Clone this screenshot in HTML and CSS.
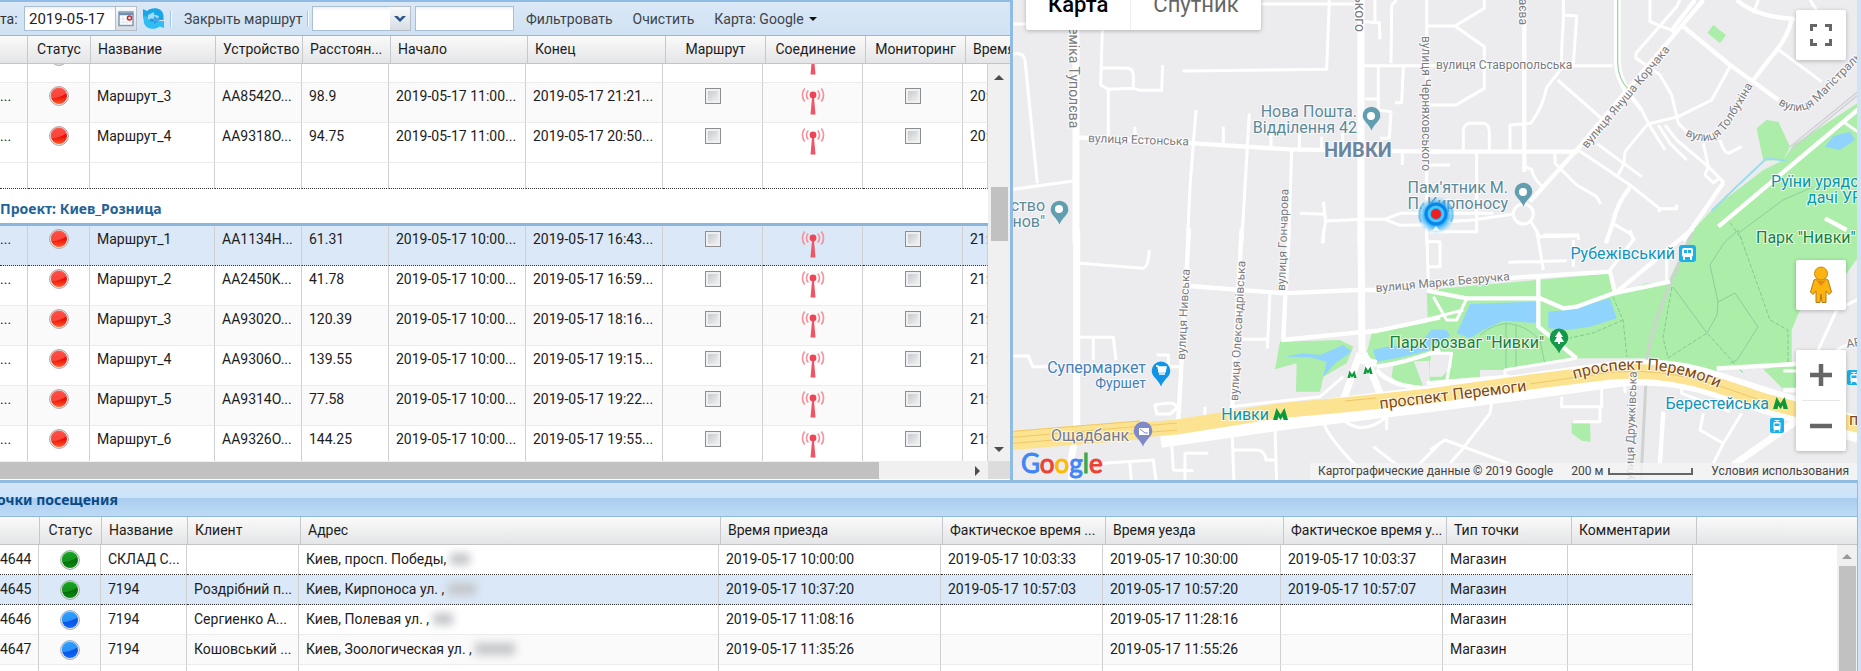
FILE: index.html
```html
<!DOCTYPE html>
<html lang="ru">
<head>
<meta charset="utf-8">
<title>Мониторинг маршрутов</title>
<link rel="stylesheet" href="styles.css">
</head>
<body>
<svg class="defs" aria-hidden="true">
  <defs>
    <linearGradient id="redFill" x1="0" y1="0" x2="0" y2="1"><stop offset="0" stop-color="#ff2a22"/><stop offset=".5" stop-color="#e80e06"/><stop offset="1" stop-color="#ff5a28"/></linearGradient>
    <linearGradient id="greenFill" x1="0" y1="0" x2="0" y2="1"><stop offset="0" stop-color="#079a12"/><stop offset=".5" stop-color="#046b0a"/><stop offset="1" stop-color="#0a8a14"/></linearGradient>
    <linearGradient id="blueFill" x1="0" y1="0" x2="0" y2="1"><stop offset="0" stop-color="#1592ff"/><stop offset=".5" stop-color="#0b4fe0"/><stop offset="1" stop-color="#0a6cff"/></linearGradient>
    <radialGradient id="glow"><stop offset="0" stop-color="#12a4f8"/><stop offset=".6" stop-color="#1aa8f6" stop-opacity=".85"/><stop offset="1" stop-color="#5cc4f8" stop-opacity="0"/></radialGradient>
    <symbol id="dot-red" viewBox="0 0 20 20"><circle cx="10" cy="10" r="9.4" fill="#f3eeee" stroke="#a9a0a0" stroke-width="1"/><circle cx="10" cy="10" r="8" fill="url(#redFill)"/><path d="M2.2 12C6 12.500 13 11 17.500 7A8 8 0 0 0 2.200 12z" fill="#ff5a50" opacity=".75"/></symbol>
    <symbol id="dot-green" viewBox="0 0 20 20"><circle cx="10" cy="10" r="9.4" fill="#eef3ee" stroke="#93a595" stroke-width="1"/><circle cx="10" cy="10" r="8" fill="url(#greenFill)"/><path d="M2.2 12C6 12.500 13 11 17.500 7A8 8 0 0 0 2.200 12z" fill="#1fae2c" opacity=".6"/></symbol>
    <symbol id="dot-blue" viewBox="0 0 20 20"><circle cx="10" cy="10" r="9.4" fill="#eef1f6" stroke="#95a2b2" stroke-width="1"/><circle cx="10" cy="10" r="8" fill="url(#blueFill)"/><path d="M2.2 12C6 12.500 13 11 17.500 7A8 8 0 0 0 2.200 12z" fill="#35a6ff" opacity=".75"/></symbol>
    <symbol id="antenna" viewBox="0 0 24 28"><circle cx="12" cy="8" r="3.4" fill="#ef4456"/><path d="M11 11h2l1.500 16.500h-5z" fill="#ef5564"/><g fill="none" stroke="#f5929b" stroke-width="1.700"><path d="M7.300 3.500a6.500 6.500 0 0 0 0 9M16.700 3.500a6.500 6.500 0 0 1 0 9M3.700 1.500a10.500 10.500 0 0 0 0 13M20.300 1.500a10.500 10.500 0 0 1 0 13"/></g></symbol>
    <symbol id="pin" viewBox="0 0 20 26"><path d="M10 0.500a9.300 9.300 0 0 1 9.300 9.300c0 6-6.300 8.200-9.300 15.700c-3-7.500-9.300-9.700-9.300-15.700A9.300 9.300 0 0 1 10 .5z"/></symbol>
    <symbol id="metro" viewBox="0 0 15 13"><path d="M0 13L3.500 1 7.500 7.500 11.500 1 15 13H10.500L9.800 9.500 7.500 13 5.200 9.500 4.500 13z" fill="#0a9a3c"/></symbol>
    <symbol id="tram" viewBox="0 0 14 15"><rect width="14" height="15" rx="2" fill="#1cb0e8"/><rect x="3.500" y="4" width="7" height="8" rx="1.500" fill="#fff"/><path d="M4.500 2.500h5M7 2.500V4" stroke="#fff"/><rect x="4.500" y="5.500" width="5" height="2.500" fill="#1cb0e8"/><path d="M5 12l-1.200 1.800M9 12l1.200 1.800" stroke="#fff"/></symbol>
  </defs>
</svg>
<div class="app">
  <div class="upper">
    <section class="routes">
      <div class="toolbar">
        <label class="date-label" for="date">та:</label>
        <div class="date-field">
          <input id="date" type="text" value="2019-05-17">
          <button class="trigger" type="button" aria-label="Календарь"><svg width="16" height="16" viewBox="0 0 16 16"><rect x="1" y="1" width="14" height="13.500" fill="#fff" stroke="#7d9bb8" stroke-width="1.500"/><path d="M1 3h14" stroke="#6f90b2" stroke-width="2.500"/><path d="M5 5v9M9 5v9M2 8h12M2 11h12" stroke="#dfe6ee"/><circle cx="11.500" cy="7" r="2" fill="#fff" stroke="#d0202a" stroke-width="1.500"/></svg></button>
        </div>
        <button class="refresh" type="button" aria-label="Обновить"><svg width="21" height="21" viewBox="0 0 21 21"><path d="M0 1L4 3C9-1.500 20-1 20.500 8V12h-6L10 10 5 9.500 0 10z" fill="#1aa5e6"/><path d="M21 20l-4.500-1.500C12 22.500 3 21.500 1 15L0 8l4 .5 7 1.500 0 3h10z" fill="#30bdf2"/><path d="M5 7l6-3v2.500l5 1.500-1 2 2 3-6 1v-2L5 11z" fill="#bfeaff" opacity=".8"/><path d="M11 8l6 4-6 4v-2.500H7v-3h4z" fill="#1b86d4" opacity=".7"/></svg></button>
        <span class="sep"></span>
        <button class="tb-btn close-route" type="button">Закрыть маршрут</button>
        <span class="sep"></span>
        <div class="combo">
          <select aria-label="Поле фильтра"><option></option></select>
          <span class="trigger combo-arrow"><svg width="12" height="8" viewBox="0 0 12 8"><path d="M0 1h3.500L6 3.500 8.500 1H12L6 7z" fill="#2a5690"/></svg></span>
        </div>
        <input class="filter" type="text" aria-label="Значение фильтра">
        <button class="tb-btn" type="button">Фильтровать</button>
        <button class="tb-btn" type="button">Очистить</button>
        <button class="tb-btn menu" type="button">Карта: Google<span class="caret"></span></button>
      </div>
      <table class="grid head">
        <colgroup><col class="w28"><col class="w63"><col class="w125"><col class="w87"><col class="w88"><col class="w137"><col class="w138"><col class="w100"><col class="w100"><col class="w100"><col></colgroup>
        <tr><th></th><th class="mid">Статус</th><th>Название</th><th>Устройство</th><th>Расстоян...</th><th>Начало</th><th>Конец</th><th class="mid">Маршрут</th><th class="mid">Соединение</th><th class="mid">Мониторинг</th><th>Время</th></tr>
      </table>
      <div class="viewport">
        <div class="scroll-area">
          <table class="grid body tall scrolled">
            <colgroup><col class="w28"><col class="w62"><col class="w125"><col class="w87"><col class="w87"><col class="w137"><col class="w137"><col class="w100"><col class="w100"><col class="w100"><col></colgroup>
            <tr><td></td><td class="mid"><svg class="dot"><use href="#dot-red"/></svg></td><td></td><td></td><td></td><td></td><td></td><td></td><td class="mid"><svg class="ant"><use href="#antenna"/></svg></td><td></td><td></td></tr>
            <tr class="alt"><td class="cut">...</td><td class="mid"><svg class="dot"><use href="#dot-red"/></svg></td><td>Маршрут_3</td><td>AA8542O...</td><td>98.9</td><td>2019-05-17 11:00...</td><td>2019-05-17 21:21...</td><td class="mid"><input type="checkbox" aria-label="Маршрут"></td><td class="mid"><svg class="ant"><use href="#antenna"/></svg></td><td class="mid"><input type="checkbox" aria-label="Мониторинг"></td><td>20:</td></tr>
            <tr><td class="cut">...</td><td class="mid"><svg class="dot"><use href="#dot-red"/></svg></td><td>Маршрут_4</td><td>AA9318O...</td><td>94.75</td><td>2019-05-17 11:00...</td><td>2019-05-17 20:50...</td><td class="mid"><input type="checkbox" aria-label="Маршрут"></td><td class="mid"><svg class="ant"><use href="#antenna"/></svg></td><td class="mid"><input type="checkbox" aria-label="Мониторинг"></td><td>20:</td></tr>
            <tr class="summary"><td></td><td></td><td></td><td></td><td></td><td></td><td></td><td></td><td></td><td></td><td></td></tr>
            <tr class="group"><th colspan="11">Проект: Киев_Розница</th></tr>
            <tr class="selected"><td class="cut">...</td><td class="mid"><svg class="dot"><use href="#dot-red"/></svg></td><td>Маршрут_1</td><td>AA1134H...</td><td>61.31</td><td>2019-05-17 10:00...</td><td>2019-05-17 16:43...</td><td class="mid"><input type="checkbox" aria-label="Маршрут"></td><td class="mid"><svg class="ant"><use href="#antenna"/></svg></td><td class="mid"><input type="checkbox" aria-label="Мониторинг"></td><td>21:</td></tr>
            <tr><td class="cut">...</td><td class="mid"><svg class="dot"><use href="#dot-red"/></svg></td><td>Маршрут_2</td><td>AA2450K...</td><td>41.78</td><td>2019-05-17 10:00...</td><td>2019-05-17 16:59...</td><td class="mid"><input type="checkbox" aria-label="Маршрут"></td><td class="mid"><svg class="ant"><use href="#antenna"/></svg></td><td class="mid"><input type="checkbox" aria-label="Мониторинг"></td><td>21:</td></tr>
            <tr class="alt"><td class="cut">...</td><td class="mid"><svg class="dot"><use href="#dot-red"/></svg></td><td>Маршрут_3</td><td>AA9302O...</td><td>120.39</td><td>2019-05-17 10:00...</td><td>2019-05-17 18:16...</td><td class="mid"><input type="checkbox" aria-label="Маршрут"></td><td class="mid"><svg class="ant"><use href="#antenna"/></svg></td><td class="mid"><input type="checkbox" aria-label="Мониторинг"></td><td>21:</td></tr>
            <tr><td class="cut">...</td><td class="mid"><svg class="dot"><use href="#dot-red"/></svg></td><td>Маршрут_4</td><td>AA9306O...</td><td>139.55</td><td>2019-05-17 10:00...</td><td>2019-05-17 19:15...</td><td class="mid"><input type="checkbox" aria-label="Маршрут"></td><td class="mid"><svg class="ant"><use href="#antenna"/></svg></td><td class="mid"><input type="checkbox" aria-label="Мониторинг"></td><td>21:</td></tr>
            <tr class="alt"><td class="cut">...</td><td class="mid"><svg class="dot"><use href="#dot-red"/></svg></td><td>Маршрут_5</td><td>AA9314O...</td><td>77.58</td><td>2019-05-17 10:00...</td><td>2019-05-17 19:22...</td><td class="mid"><input type="checkbox" aria-label="Маршрут"></td><td class="mid"><svg class="ant"><use href="#antenna"/></svg></td><td class="mid"><input type="checkbox" aria-label="Мониторинг"></td><td>21:</td></tr>
            <tr><td class="cut">...</td><td class="mid"><svg class="dot"><use href="#dot-red"/></svg></td><td>Маршрут_6</td><td>AA9326O...</td><td>144.25</td><td>2019-05-17 10:00...</td><td>2019-05-17 19:55...</td><td class="mid"><input type="checkbox" aria-label="Маршрут"></td><td class="mid"><svg class="ant"><use href="#antenna"/></svg></td><td class="mid"><input type="checkbox" aria-label="Мониторинг"></td><td>21:</td></tr>
          </table>
        </div>
        <div class="vbar"><span class="arrow up"></span><span class="vthumb"></span><span class="arrow down"></span></div>
        <div class="hbar"><span class="hthumb"></span><span class="arrow right"></span></div>
        <div class="corner"></div>
      </div>
    </section>
    <div class="splitter"></div>
    <section class="map">
      <svg class="canvas" viewBox="1013 0 844 480" preserveAspectRatio="xMidYMid slice" role="img" aria-label="Карта района Нивки">
        <rect x="900" y="-100" width="1100" height="700" fill="#ececee"/>
        <!-- parks and water -->
        <g transform="translate(1430 0) scale(.33333)">
          <path fill="#abeda9" d="M1300 298L1090 435 1060 480 1000 510 850 625 790 690 765 722H1300zM980 385L1010 360 1045 365 1080 440 1060 480 1000 482zM850 75L888 105 870 130 832 98z"/>
          <path fill="#90d4fd" d="M1185 440L1210 408 1260 395 1275 420 1230 450z"/>
          <path fill="none" stroke="#9bdcf0" stroke-width="6" d="M1070 482L1010 475 925 555 845 632"/>
          <path fill="none" stroke="#cfcfd6" stroke-width="4" d="M1300 262L1080 440M1300 272L1085 446"/>
        </g>
        <g transform="translate(1430 230) scale(.33333)">
          <path fill="#abeda9" d="M-10 180L320 150 545 130 555 190 650 160 715 155 790-4H1300V60L1250 130 1110 240 1085 300V400L860 415V430L780 405 640 385H440L250 420H150V452L0 462zM1000 418L1100 400V478H1060zM425 580H480L482 635 455 632 425 610z"/>
          <path fill="#ececee" d="M0 368H65V410L35 440 0 440z"/>
          <path fill="#90d4fd" d="M80 310L120 222 320 215 325 280 220 272 160 300 120 325zM355 245L410 240 540 205 560 265 480 290 410 300 355 295zM-60 290L-10 298 50 300 60 318 0 350-60 350z"/>
          <path fill="#ececee" d="M650 140L715 70V150z"/>
        </g>
        <g transform="translate(1010 230) scale(.33333)">
          <path fill="#abeda9" d="M810 335L990 330 1030 350 1010 400 940 440 930 485H858L860 400 795 418zM1085 310L1262 275V392L1180 395 1100 405 1070 370zM1150 405L1210 390 1240 470 1180 475 1145 440zM1262 180L1300 178V250L1270 210z"/>
          <path fill="#90d4fd" d="M825 380L880 370 930 375 1000 345 1025 365 975 400 940 440 950 395 900 382zM1090 360L1130 350 1230 345 1262 300V360L1180 380 1100 395z"/>
        </g>
        <!-- railway and footpaths -->
        <g fill="none">
          <path stroke="#cdd3cf" stroke-width="3" d="M1693 230L1672 280Q1650 330 1647 360L1641 480"/>
          <g stroke="#80cb93" stroke-width="1" stroke-dasharray="4 2"><path d="M1738 230L1770 320 1788 330V363M1672 287L1663 337 1668 358 1707 333 1743 373M1613 297L1623 320 1627 357M1623 320L1593 333 1570 338M1727 218L1742 240"/></g>
          <g stroke="#8ccf9c" stroke-width="1"><path d="M1673 287L1707 333 1717 315 1718 302 1710 265 1724 243 1738 230M1718 302L1735 293 1758 327 1737 360 1730 363M1740 232L1783 200 1813 187M1480 335Q1510 310 1540 340L1545 365M1506 322V370M1516 325V368"/></g>
        </g>
        <!-- streets -->
        <g class="streets">
          <g transform="translate(1010 0) scale(.33333)">
            <path class="wide" d="M198 0V730M1053 0V730"/>
            <path d="M8 72H75M8 162Q40 155 45 180L82 550M8 568L190 543M277 90L272 255 295 268 370 265 390 271H455L458 195M277 203L355 205Q370 208 370 230V265M295 268V410M752 12H1040M958 0L950 208 518 213M558 330L540 560 532 730M718 340L695 730M845 448L836 730M375 380V415M640 380V430M783 400V440M868 400V445M935 410V448M998 400V448M870 640L943 643M940 605L947 665 936 730M945 663L1060 658 1125 658 1170 640 1450 640M1125 658L1170 676 1290 674M1062 65L1108 68 1110 118M1095 0V65M1160 0L1145 15 1143 190M1062 197H1270M1105 197V330L1143 335 1138 415H1110M1180 200L1175 308H1155M1065 297H1105M1177 450V495M1250 0V730"/>
            <path class="mid-w" d="M200 412L550 430 840 448 1060 452 1290 455"/>
          </g>
          <g transform="translate(1430 0) scale(.33333)">
            <path d="M-10 78H75L163 25V0M75 78L163 140V265L78 315H-10M-10 197H548M400 0V60L395 150V205L350 262Q340 320 302 370L240 375V450M400 45L440 48 430 195M383 240L520 360M100 455V390Q105 370 120 370H160Q178 370 178 400V450M140 455V695H0M-10 495H60M283 500L305 508Q310 540 345 565M970 40L985 0M1140 0L1160 30M660 0V65L735 95M750 0L740 20 618 160V175L690 225 725 285 745 370 775 400M900 200L845 300 745 350 655 372M635 330L655 370 585 455 582 490 565 525M655 370L705 450M685 375L720 430 770 480M705 375L740 420 835 500 825 525 850 548 868 535M820 430L835 500M870 420Q880 455 895 460L935 440M445 450L600 555 688 625V636M685 626H740V614M500 430L635 530M375 460V490L400 515 440 555 500 590 512 612M1040 145L1175 245M548 670L600 700 615 722M300 660L330 710 440 708M-10 668L130 660 250 642M835 500L882 548M1240 365L1290 400"/>
            <path class="mid-w" d="M283 0V515M-10 455H445M760 80L900 195 970 245 1045 300M920 0Q975 50 1095 57M1085 60Q1070 120 1020 175L970 240M760 722L880 548M600 562Q560 610 548 670L528 730M865 680L1300 315M1185 655L1250 690"/>
            <path class="wide" d="M562 0V190Q565 240 600 285"/>
            <path class="mid-w" d="M820 0L740 95 440 450 300 605M795 0L722 95M600 285L635 330"/>
            <circle cx="280" cy="642" r="30"/>
            <path class="tree-line" d="M563 0V190Q565 235 592 265"/>
          </g>
          <g transform="translate(1010 230) scale(.33333)">
            <path class="wide" d="M200 0V600L185 680V765M1053-5L1056 370"/>
            <path d="M210 100L400 115Q415 110 418 60M780 190L772 355M695 328H772M210 322H310L318 390M250 322V390M10 378H55L68 410H125M440 375H475V410H508M435 525Q500 510 500 535L480 552H440zM940 0V40M1250 0L1255 155M1250 35H1290V110H1255M585 530V560M510 600Q485 610 485 640L490 720 550 722M525 765V670H595M665 560L672 765M672 660H740Q765 660 768 690H800M795 590L800 765M940 575Q950 620 1060 730M1290 640L1200 730M1090 650L1180 720M280 700L430 690 440 765M360 700L365 765M1000 570Q1060 620 1130 560V600M665 530L930 500 1000 440"/>
            <path class="mid-w" d="M537-5L505 570M695-5L665 560M836-5L820 325M540 168L820 190 1040 180H1100M815 330L1040 308 1100 303 1290 262M1100 410Q1180 400 1290 360M1100 420Q1150 480 1290 475"/>
            <path class="wide" d="M1050 370L1000 510M1062 370L1110 490M1052 390L1100 400"/>
          </g>
          <g transform="translate(1430 230) scale(.33333)">
            <path d="M110 205L80 270H50L10 200M-10 268L100 240M235 97L410 92M320 0L340 120M340 15H445V30M430 30V110M600 0L610 30 555 100 540 120M710 75V155M185 520L180 550 95 660 60 700M0 660L45 630 235 700M395 500V530H515V460M510 530V575H430M585 450V490M755 470V490L900 545M935 550L880 640 810 600 820 550M880 640L850 700M1160 370L1220 240 1300 200M1220 360L1300 320M0 370H65L50 455M225 460V420L440 385M1060 423H1100"/>
            <path class="mid-w" d="M-10 182L110 205H330L400 235 440 230 550 190 720 155M325 145V290L440 385M215 145L540 125 555 190 790-5M860 415L1100 402M700 545L690 700M-10 460L240 440M1060 480H1110"/>
            <path class="wide" d="M910 705L1110 565"/>
          </g>
        </g>
        <!-- avenue -->
        <g fill="none">
          <path stroke="#fff" stroke-width="26" d="M1160 435L1277 418 1430 399 1530 386 1610 375Q1665 367 1717 385L1770 402 1860 430"/>
          <path stroke="#fbe391" stroke-width="15" d="M1005 442L1177 427 1277 411 1343 405 1430 396 1530 382 1610 372Q1665 368 1717 385L1765 401 1865 427"/>
          <path stroke="#fbe391" stroke-width="19" d="M1005 441L1140 430"/>
          <path stroke="#f0c868" stroke-width="1" d="M1005 432L1140 421M1005 438L1177 423M1005 444L1177 430M1345 401L1376 398M1530 384L1612 372Q1665 368 1717 385L1765 402"/>
        </g>
        <!-- street names -->
        <g class="street-label">
          <text class="s14" transform="translate(1069 27) rotate(90)">еміка Туполєва</text>
          <text transform="translate(1088 142) rotate(2)">вулиця Естонська</text>
          <text class="s14" text-anchor="end" transform="translate(1355 32) rotate(90)">ського</text>
          <text transform="translate(1422 36) rotate(90)">вулиця Черняховського</text>
          <text text-anchor="end" transform="translate(1519 25) rotate(90)">аєва</text>
          <text transform="translate(1285 291) rotate(-88)">вулиця Гончарова</text>
          <text transform="translate(1185 360) rotate(-87)">вулиця Нивська</text>
          <text transform="translate(1238 401) rotate(-87)">вулиця Олександрівська</text>
          <text x="1436" y="69">вулиця Ставропольська</text>
          <text transform="translate(1587 149) rotate(-50)">вулиця Януша Корчака</text>
          <path id="tolb" fill="none" stroke="none" d="M1685 135Q1714 152 1731 122Q1743 103 1755 82"/>
          <text><textPath href="#tolb">вулиця Толбухіна</textPath></text>
          <path id="mag" fill="none" stroke="none" d="M1778 104Q1797 118 1816 104L1875 44"/>
          <text><textPath href="#mag">вулиця Магістраль</textPath></text>
          <text transform="translate(1376 292) rotate(-5)">вулиця Марка Безручка</text>
          <text transform="translate(1633 480) rotate(-88)">улиця Дружківська</text>
          <text transform="translate(1847 348) rotate(-10)">АР</text>
        </g>
        <g class="avenue-label">
          <text transform="translate(1380 409) rotate(-7)">проспект Перемоги</text>
          <path id="ave" fill="none" stroke="none" d="M1574 379Q1655 356 1722 390"/>
          <text><textPath href="#ave">проспект Перемоги</textPath></text>
          <text x="1849" y="425">п</text>
        </g>
        <!-- places -->
        <g class="place">
          <g fill="#5c8999"><text x="1357" y="117" text-anchor="end">Нова Пошта.</text><text x="1357" y="133" text-anchor="end">Відділення 42</text>
          <text x="1508" y="193" text-anchor="end">Пам'ятник М.</text><text x="1508" y="209" text-anchor="end">П. Кирпоносу</text>
          <text x="1045" y="211" text-anchor="end">ство</text><text x="1045" y="227" text-anchor="end">нов"</text></g>
          <text class="district" x="1324" y="157">НИВКИ</text>
          <g fill="#4480b8"><text x="1146" y="373" text-anchor="end">Супермаркет</text><text class="s14" x="1146" y="388" text-anchor="end">Фуршет</text></g>
          <text x="1051" y="441" fill="#727a8c">Ощадбанк</text>
          <g fill="#0a96a8"><text x="1269" y="420" text-anchor="end">Нивки</text><text x="1771" y="187">Руїни урядо</text><text x="1807" y="203">дачі УР</text></g>
          <g fill="#1193bd"><text x="1675" y="259" text-anchor="end">Рубежівський</text><text x="1769" y="409" text-anchor="end">Берестейська</text></g>
          <g fill="#15803c"><text x="1756" y="243">Парк "Нивки"</text><text x="1544" y="348" text-anchor="end">Парк розваг "Нивки"</text></g>
        </g>
        <g>
          <use href="#pin" x="1362" y="106" width="19" height="25" fill="#609eb0"/><circle cx="1371" cy="116" r="4" fill="#fff"/>
          <use href="#pin" x="1514" y="182" width="19" height="25" fill="#609eb0"/><circle cx="1523" cy="192" r="4" fill="#fff"/>
          <use href="#pin" x="1050" y="200" width="19" height="25" fill="#609eb0"/><circle cx="1059" cy="209" r="4" fill="#fff"/>
          <use href="#pin" x="1151" y="361" width="20" height="26" fill="#0f94e8"/><path d="M1156 366h2l1 6h6l1-5h-7.500M1159 374h6" stroke="#fff" stroke-width="1.500" fill="none"/><path d="M1159 367h7l-1 5h-6z" fill="#fff"/>
          <use href="#pin" x="1133" y="421" width="20" height="26" fill="#8089c8"/><rect x="1139" y="428" width="10" height="7" fill="#fff"/><path d="M1140 429l5 4M1145 433h3" stroke="#8089c8"/>
          <use href="#pin" x="1549" y="328" width="20" height="26" fill="#12994a"/><path d="M1559 331l4 6h-2l3 5h-4v2h-2v-2h-4l3-5h-2z" fill="#fff"/>
          <use href="#metro" x="1273" y="407" width="15" height="13"/><use href="#metro" x="1347" y="370" width="10" height="8"/><use href="#metro" x="1363" y="366" width="10" height="8"/><use href="#metro" x="1773" y="396" width="15" height="13"/>
          <use href="#tram" x="1770" y="418" width="14" height="15"/><use href="#tram" x="1847" y="370" width="14" height="15"/>
          <rect x="1679" y="245" width="17" height="17" rx="3" fill="#1cb0e8"/><rect x="1682" y="248" width="11" height="9" rx="2" fill="#fff"/><path d="M1684 250h3v3h-3zM1688 250h3v3h-3z" fill="#1cb0e8"/><path d="M1684 257v3M1691 257v3" stroke="#fff" stroke-width="2"/>
          <circle cx="1436" cy="215" r="19" fill="url(#glow)"/>
          <g fill="none"><path d="M1421 222A17 17 0 0 1 1424 203M1451 222A17 17 0 0 0 1448 203" stroke="#3aaef0" stroke-width="2" opacity=".6"/><circle cx="1436" cy="214" r="10" stroke="#0a86ea" stroke-width="3"/><circle cx="1436" cy="214" r="7" stroke="#4cc8fa" stroke-width="2"/></g>
          <path d="M1432 231l4-5 4 5z" fill="#e8f6ff"/>
          <ellipse cx="1436" cy="214" rx="5" ry="5" fill="#f01c20"/>
        </g>
      </svg>
      <div class="map-type"><button type="button" class="on">Карта</button><button type="button">Спутник</button></div>
      <button class="ctl fullscreen" type="button" aria-label="Полноэкранный режим"><svg width="22" height="22" viewBox="0 0 22 22"><path d="M1.500 7V1.500H7M15 1.500h5.500V7M20.500 15v5.500H15M7 20.500H1.500V15" fill="none" stroke="#666" stroke-width="3"/></svg></button>
      <button class="ctl pegman" type="button" aria-label="Просмотр улиц"><svg width="22" height="38" viewBox="0 0 22 38"><path d="M4 14Q11 10 18 14L21.500 26 19 28.500 16 25V36.500H12L11 28 10 36.500H6V25L3 28.500.5 26z" fill="#fbb30f" stroke="#b5790f"/><circle cx="11" cy="7.500" r="6.500" fill="#fbb30f" stroke="#c98a10"/><path d="M6 14q5 2 10 0l-5 6z" fill="#e8851c"/></svg></button>
      <div class="zoom"><button type="button" aria-label="Приблизить"><svg width="22" height="22" viewBox="0 0 22 22"><path d="M11 0v22M0 11h22" stroke="#666" stroke-width="4.500"/></svg></button><button type="button" aria-label="Отдалить"><svg width="22" height="22" viewBox="0 0 22 22"><path d="M0 11h22" stroke="#666" stroke-width="4.500"/></svg></button></div>
      <div class="logo"><span class="gb">G</span><span class="gr">o</span><span class="gy">o</span><span class="gb">g</span><span class="gg">l</span><span class="gr">e</span></div>
      <div class="credits"><span>Картографические данные © 2019 Google</span><span class="scale">200 м<i></i></span><a href="#terms">Условия использования</a></div>
    </section>
  </div>
  <section class="visits">
    <h2>очки посещения</h2>
    <table class="grid head">
      <colgroup><col class="w40"><col class="w62"><col class="w86"><col class="w113"><col class="w420"><col class="w222"><col class="w163"><col class="w178"><col class="w163"><col class="w125"><col class="w125"><col></colgroup>
      <tr><th></th><th class="mid">Статус</th><th>Название</th><th>Клиент</th><th>Адрес</th><th>Время приезда</th><th>Фактическое время ...</th><th>Время уезда</th><th>Фактическое время у...</th><th>Тип точки</th><th>Комментарии</th><th></th></tr>
    </table>
    <div class="visits-body">
      <div class="scroll-area">
        <table class="grid body short">
          <colgroup><col class="w39"><col class="w62"><col class="w86"><col class="w112"><col class="w420"><col class="w222"><col class="w162"><col class="w178"><col class="w162"><col class="w125"><col class="w125"></colgroup>
          <tr><td class="cut">4644</td><td class="mid"><svg class="dot"><use href="#dot-green"/></svg></td><td>СКЛАД С...</td><td></td><td>Киев, просп. Победы, <span class="smudge w20"></span></td><td>2019-05-17 10:00:00</td><td>2019-05-17 10:03:33</td><td>2019-05-17 10:30:00</td><td>2019-05-17 10:03:37</td><td>Магазин</td><td></td></tr>
          <tr class="selected"><td class="cut">4645</td><td class="mid"><svg class="dot"><use href="#dot-green"/></svg></td><td>7194</td><td>Роздрібний п...</td><td>Киев, Кирпоноса ул. , <span class="smudge w28"></span></td><td>2019-05-17 10:37:20</td><td>2019-05-17 10:57:03</td><td>2019-05-17 10:57:20</td><td>2019-05-17 10:57:07</td><td>Магазин</td><td></td></tr>
          <tr><td class="cut">4646</td><td class="mid"><svg class="dot"><use href="#dot-blue"/></svg></td><td>7194</td><td>Сергиенко А...</td><td>Киев, Полевая ул. , <span class="smudge w20"></span></td><td>2019-05-17 11:08:16</td><td></td><td>2019-05-17 11:28:16</td><td></td><td>Магазин</td><td></td></tr>
          <tr class="alt"><td class="cut">4647</td><td class="mid"><svg class="dot"><use href="#dot-blue"/></svg></td><td>7194</td><td>Кошовський ...</td><td>Киев, Зоологическая ул. , <span class="smudge w40"></span></td><td>2019-05-17 11:35:26</td><td></td><td>2019-05-17 11:55:26</td><td></td><td>Магазин</td><td></td></tr>
          <tr><td></td><td></td><td></td><td></td><td></td><td></td><td></td><td></td><td></td><td></td><td></td></tr>
        </table>
      </div>
      <div class="vbar wide-bar"><span class="arrow up pale"></span><span class="vthumb long"></span></div>
    </div>
  </section>
</div>
</body>
</html>
```
FILE: styles.css
```css
* { box-sizing: border-box; }
body {
  margin: 0;
  font: 14px/18px Roboto, "Open Sans", sans-serif;
  color: #1c1c1c;
  background: #cfe2f6;
}
button, input, select { font: inherit; color: inherit; margin: 0; }
.defs { position: absolute; width: 0; height: 0; }
.app {
  height: 100vh;
  display: grid;
  grid-template-rows: 480fr 191fr;
  overflow: hidden;
}
.upper {
  display: grid;
  grid-template-columns: 1010fr 3px 844fr;
  min-height: 0;
  margin-right: 4px;
}

/* routes panel */
.routes {
  display: flex;
  flex-direction: column;
  min-width: 0;
  min-height: 0;
  background: #fff;
}
.toolbar {
  display: flex;
  align-items: center;
  height: 36px;
  flex: none;
  border-top: 2px solid #8fbbe4;
  border-bottom: 1px solid #8fb9dc;
  background: linear-gradient(#dbe8f6, #cfe2f3);
  color: #444;
}
.date-label { width: 24px; color: #333; }
.date-field, .combo { position: relative; display: flex; height: 25px; }
.date-field input, .filter, .combo select {
  border: 1px solid #a9bfd3;
  border-radius: 0;
  background: linear-gradient(#f0f0f0, #fff 4px);
  height: 25px;
  padding: 0 4px;
  outline: 0;
}
.date-field input { width: 92px; color: #222; font-size: 15px; }
.trigger {
  display: flex;
  align-items: center;
  justify-content: center;
  width: 21px;
  height: 25px;
  padding: 0;
  border: 1px solid #b4bfca;
  border-left: 0;
  background: linear-gradient(#fafafa, #d6dde4);
}
.refresh { display: flex; border: 0; padding: 0; margin: 0 6px; background: none; }
.sep { width: 2px; height: 16px; background: linear-gradient(90deg, #98c8ee 1px, #fff 1px); }
.tb-btn { border: 0; padding: 0; background: none; white-space: nowrap; margin-right: 20px; color: #3d4349; }
.close-route { width: 112px; margin: 0 11px 0 12px; text-align: left; }
.combo { margin-left: 3px; margin-right: 4px; }
.combo select { appearance: none; width: 99px; }
.combo-arrow { position: absolute; right: 0; top: 0; pointer-events: none; }
.filter { width: 99px; margin-right: 12px; }
.menu { display: flex; align-items: center; gap: 5px; }
.caret { border: 4px solid transparent; border-top-color: #111; border-bottom: 0; }

/* grids */
.grid { border-collapse: separate; border-spacing: 0; table-layout: fixed; width: 100%; }
.grid th, .grid td { overflow: hidden; white-space: nowrap; text-align: left; }
.head { flex: none; background: linear-gradient(#fafafa, #e4e5e7); border-bottom: 1px solid #c5c5c5; }
.head th {
  height: 27px;
  padding: 0 0 1px 7px;
  font-weight: 400;
  border-right: 1px solid #c5c9ce;
}
.head th:last-child { border-right: 0; }
.grid .mid { text-align: center; padding-left: 0; padding-right: 0; }
.body td {
  vertical-align: top;
  border-right: 1px solid #d0d0d0;
  border-bottom: 1px solid #ececec;
  padding: 4px 0 0 7px;
}
.body .cut { padding-left: 0; }
.tall td { height: 40px; }
.short { width: 1693px; }
.short td { height: 30px; padding-top: 5px; }
.alt td { background: #fafafa; }
.selected td { background: #dbe8f7; border-bottom: 1px dotted #333; }
.short tr:has(+ .selected) td { border-bottom: 1px dotted #333; }
.dot { display: block; width: 20px; height: 20px; margin: 0 auto; }
.ant { display: block; width: 24px; height: 28px; margin: 0 auto; }
.tall .mid .dot { margin-top: -1px; }
input[type="checkbox"] {
  appearance: none;
  display: block;
  width: 16px;
  height: 16px;
  margin: 1px auto 0;
  border: 1px solid #8c8f92;
  background: linear-gradient(135deg, #bfc4c9, #f6f6f6);
  box-shadow: inset 0 0 0 2px #f0f0f0;
}
.viewport {
  flex: 1;
  min-height: 0;
  display: grid;
  grid-template-columns: 1fr 22px;
  grid-template-rows: 1fr 18px;
  padding-bottom: 1px;
}
.scroll-area { overflow: hidden; min-height: 0; }
.scrolled { margin-top: -21px; }
.tall .summary td { height: 26px; border-bottom: 1px dotted #333; }
.body .group th {
  height: 37px;
  padding: 5px 0 0;
  border-bottom: 3px solid #8ab6de;
  color: #1f6398;
}
.body .group th, .visits h2 { font: 700 14px/18px "Noto Sans", "Open Sans", sans-serif; }
.vbar { display: flex; flex-direction: column; align-items: center; background: #f0f0f0; padding: 11px 0 9px; }
.vthumb { width: 17px; height: 54px; margin-top: 107px; background: #c1c1c1; }
.arrow { border: 5px solid transparent; flex: none; }
.up { border-top: 0; border-bottom-color: #4c4c4c; }
.down { border-bottom: 0; border-top-color: #4c4c4c; margin-top: auto; }
.right { border-right: 0; border-left-color: #4c4c4c; margin-right: 8px; }
.pale { border-bottom-color: #999; }
.hbar { display: flex; align-items: center; justify-content: space-between; background: #f0f0f0; padding-top: 1px; }
.hthumb { width: 89%; height: 17px; background: #c1c1c1; }
.corner { background: #dcdcdc; }
.splitter { background: #90bbe2; }

/* map */
.map { position: relative; overflow: hidden; min-width: 0; }
.canvas { position: absolute; width: 100%; height: 100%; display: block; }
.streets { fill: none; stroke: #fff; stroke-width: 9; stroke-linejoin: round; }
.streets .mid-w { stroke-width: 13; }
.streets .wide { stroke-width: 21; }
.streets .tree-line { stroke: #a4d8ae; stroke-width: 4; }
.canvas text { paint-order: stroke; stroke: #fff; stroke-width: 2px; stroke-opacity: .8; }
.street-label { font-size: 12px; fill: #7b7b80; }
.avenue-label { font-size: 16px; fill: #7c4a20; }
.place { font-size: 16px; }
.canvas .s14 { font-size: 14px; }
.place .district { font-size: 20px; font-weight: 700; fill: #6c86a2; }
.map-type {
  position: absolute;
  left: 13px;
  top: -20px;
  height: 50px;
  display: flex;
  background: #fff;
  border-radius: 2px;
  box-shadow: 0 1px 4px rgba(0, 0, 0, .25);
}
.map-type button { border: 0; background: none; padding: 0 22px; font-size: 22px; color: #666; }
.map-type .on { color: #000; font-weight: 500; border-right: 1px solid #eee; }
.ctl, .zoom {
  position: absolute;
  right: 11px;
  width: 50px;
  background: #fff;
  border: 0;
  border-radius: 2px;
  box-shadow: 0 1px 4px rgba(0, 0, 0, .25);
}
.ctl { height: 50px; display: flex; align-items: center; justify-content: center; }
.fullscreen { top: 10px; }
.pegman { bottom: 170px; }
.zoom { bottom: 29px; display: flex; flex-direction: column; padding: 0 6px; }
.zoom button { height: 50px; padding: 0; border: 0; background: none; display: flex; align-items: center; justify-content: center; }
.zoom button + button { border-top: 1px solid #e6e6e6; height: 51px; }
.logo { position: absolute; left: 8px; bottom: 0; font: 400 26px/34px Lato, sans-serif; -webkit-text-stroke: 1px; text-shadow: 0 0 2px #fff; }
.gb { color: #4285f4; }
.gr { color: #ea4335; }
.gy { color: #fbbc05; }
.gg { color: #34a853; }
.credits {
  position: absolute;
  right: 0;
  bottom: 0;
  display: flex;
  gap: 18px;
  padding: 0 8px;
  background: rgba(245, 245, 245, .8);
  font-size: 12px;
  line-height: 17px;
  color: #444;
}
.credits a { color: inherit; text-decoration: none; }
.scale { display: flex; align-items: center; gap: 5px; }
.scale i { width: 85px; height: 7px; border: 2px solid #666; border-top: 0; }

/* visits panel */
.visits {
  display: flex;
  flex-direction: column;
  min-height: 0;
  border-top: 3px solid #90bbe0;
  border-right: 1px solid #8fbbe4;
  margin-right: 3px;
  background: #fff;
}
.visits h2 {
  flex: none;
  height: 34px;
  margin: 0;
  overflow: hidden;
  text-indent: -3px;
  padding-top: 8px;
  color: #0b4a86;
  border-bottom: 1px solid #8fb9dc;
  background: linear-gradient(#d3e5f6, #cbe3fb 15px, #a9cdef 15px, #bedbf5);
}
.visits-body { flex: 1; min-height: 0; display: grid; grid-template-columns: 1fr 20px; }
.wide-bar { padding-top: 9px; padding-bottom: 0; overflow: hidden; }
.long { flex: 1; margin-top: 7px; }
.smudge { display: inline-block; height: 12px; background: #c4c6ca; filter: blur(4px); vertical-align: -1px; }
.w20 { width: 20px; } .w28 { width: 28px; } .w39 { width: 39px; } .w40 { width: 40px; }
.w62 { width: 62px; } .w63 { width: 63px; } .w86 { width: 86px; } .w87 { width: 87px; }
.w88 { width: 88px; } .w100 { width: 100px; } .w112 { width: 112px; } .w113 { width: 113px; }
.w125 { width: 125px; } .w137 { width: 137px; } .w138 { width: 138px; } .w162 { width: 162px; }
.w163 { width: 163px; } .w178 { width: 178px; } .w222 { width: 222px; } .w420 { width: 420px; }
```
